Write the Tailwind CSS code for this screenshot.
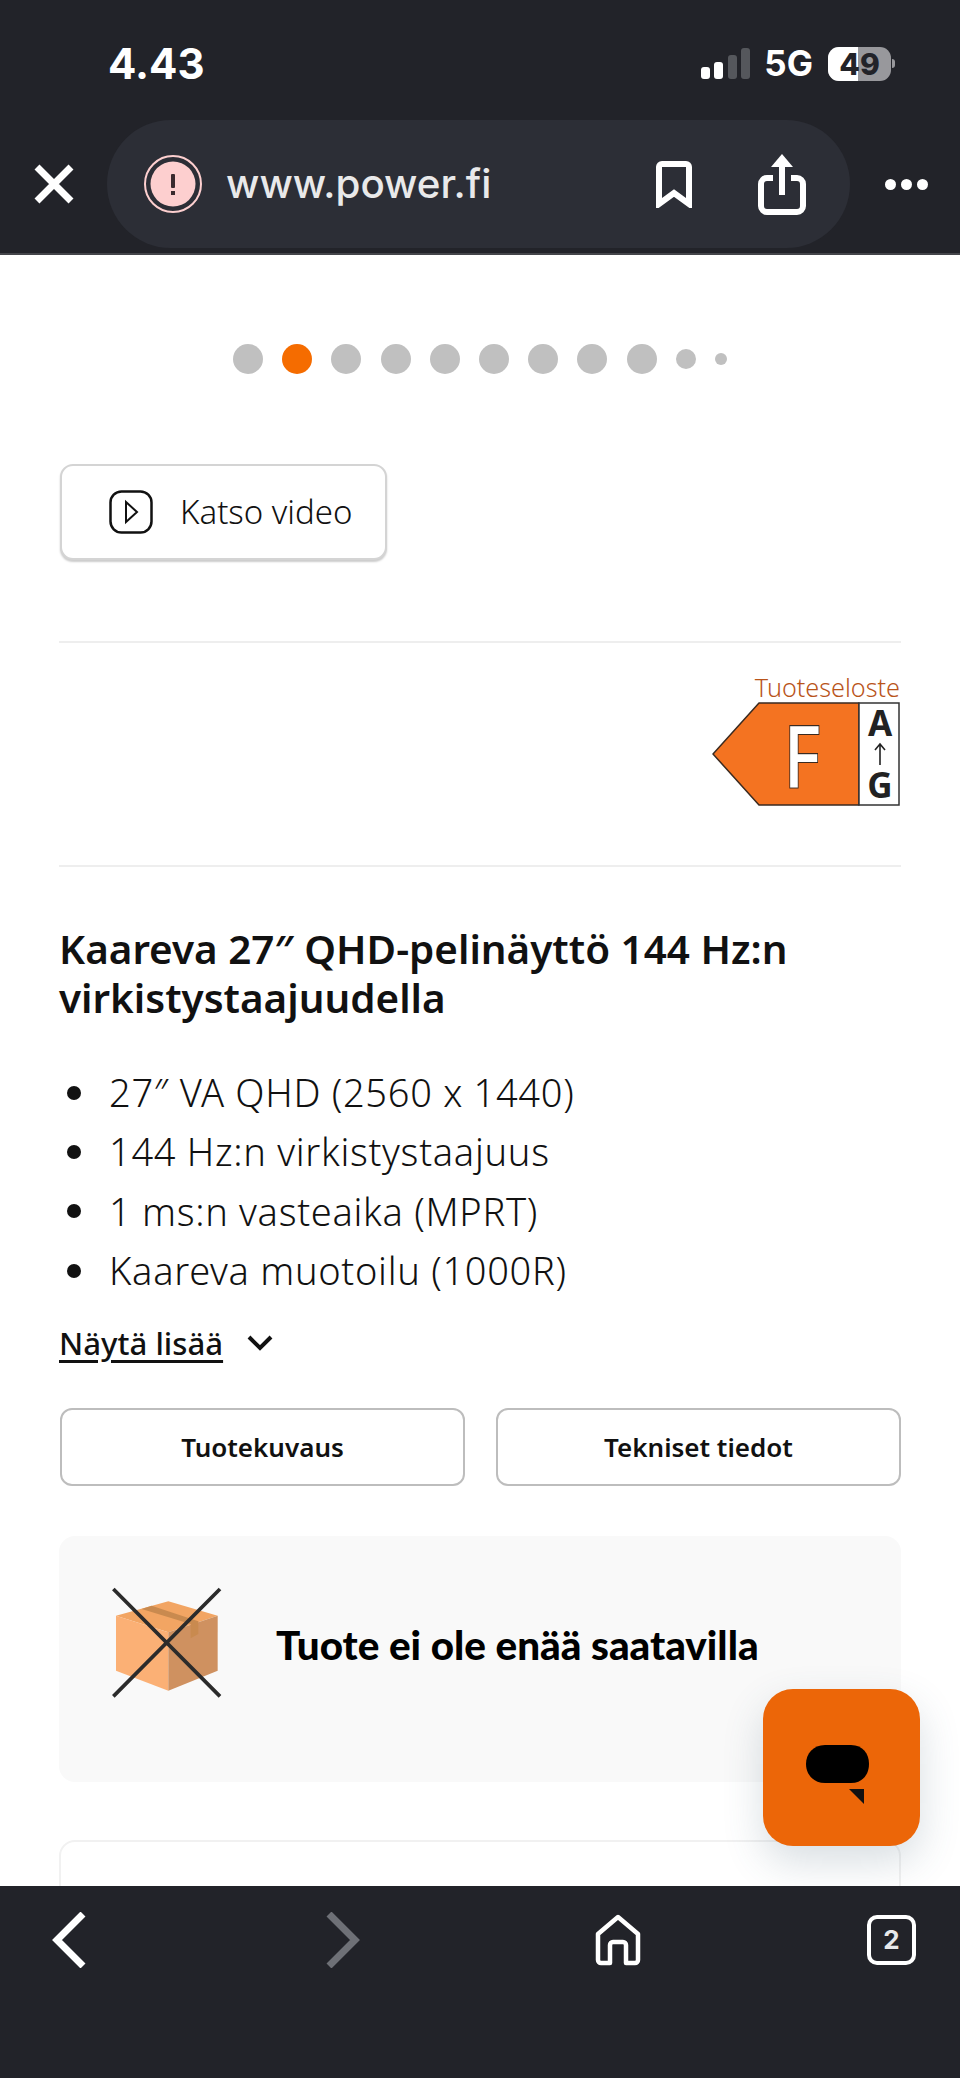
<!DOCTYPE html>
<html lang="fi">
  <head>
    <meta charset="UTF-8" />
    <meta name="viewport" content="width=device-width, initial-scale=1.0" />
    <title>Power.fi</title>
    <script src="https://cdn.jsdelivr.net/npm/@tailwindcss/browser@4"></script>
  </head>
  <body class="bg-white">
    <div class="flex flex-col h-[2078px] w-[960px] overflow-hidden font-['Noto_Sans','Open_Sans',sans-serif]">
      <!-- browser top bar -->
      <header class="h-[255px] shrink-0 bg-[#222329] border-b-2 border-[#44454a] font-['Inter',sans-serif]">
        <div class="h-[120px] flex items-start pl-[108px]">
          <span class="mt-[40px] text-[42px] leading-[48px] font-bold text-white">4.43</span>
          <div class="ml-auto mr-[65px] mt-[47px] flex items-start">
            <div class="flex items-end gap-[4.5px] h-[32px]">
              <div class="w-[9px] h-[12px] rounded-[3px] bg-white"></div>
              <div class="w-[9px] h-[17px] rounded-[3px] bg-white"></div>
              <div class="w-[9px] h-[24px] rounded-[3px] bg-[#55575c]"></div>
              <div class="w-[9px] h-[31px] rounded-[3px] bg-[#55575c]"></div>
            </div>
            <span class="ml-[14px] text-[35px] leading-[36px] font-bold text-white mt-[-2px]">5G</span>
            <div class="ml-[15px] relative w-[63px] h-[34px] rounded-[11px] overflow-hidden bg-[#98989c] flex items-center justify-center">
              <div class="absolute left-0 top-0 h-full w-[30px] bg-white"></div>
              <span class="relative text-[30px] leading-[34px] font-extrabold text-[#222329]">49</span>
            </div>
            <div class="mt-[12px] ml-[1px] w-[3px] h-[9px] rounded-r-full bg-[#98989c]"></div>
          </div>
        </div>
        <div class="flex items-center">
          <svg class="ml-[34px] w-[40px] h-[40px]" viewBox="0 0 40 40" fill="none" stroke="#fff" stroke-width="7">
            <path d="M3 3l34 34M37 3L3 37" />
          </svg>
          <div class="ml-[33px] w-[743px] h-[128px] rounded-[64px] bg-[#2c2e36] flex items-center">
            <svg class="ml-[37px] w-[58px] h-[58px]" viewBox="0 0 58 58">
              <circle cx="29" cy="29" r="28" fill="none" stroke="#fdcfcf" stroke-width="2" />
              <circle cx="29" cy="29" r="22.5" fill="#fdcfcf" />
              <rect x="27" y="19" width="4" height="14" rx="1" fill="#3a2a2e" />
              <rect x="27" y="36" width="4" height="4" fill="#3a2a2e" />
            </svg>
            <span class="ml-[24px] text-[40.3px] leading-[48px] font-medium text-[#e9e9ea]">www.power.fi</span>
            <svg class="ml-auto w-[38px] h-[48px]" viewBox="0 0 38 48" fill="none" stroke="#fff" stroke-width="6">
              <path d="M4 44V7a3 3 0 0 1 3-3h24a3 3 0 0 1 3 3v37L19 33z" stroke-linejoin="miter" />
            </svg>
            <svg class="ml-[65px] mr-[44px] w-[48px] h-[62px]" viewBox="0 0 48 62" fill="none" stroke="#fff" stroke-width="6">
              <path d="M15 25H9a6 6 0 0 0-6 6v22a6 6 0 0 0 6 6h30a6 6 0 0 0 6-6V31a6 6 0 0 0-6-6h-6" />
              <path d="M24 42V8" />
              <path d="M24 1L13 14h22z" fill="#fff" stroke="none" />
            </svg>
          </div>
          <div class="ml-[35px] flex gap-[5px]">
            <div class="w-[11px] h-[11px] rounded-full bg-white"></div>
            <div class="w-[11px] h-[11px] rounded-full bg-white"></div>
            <div class="w-[11px] h-[11px] rounded-full bg-white"></div>
          </div>
        </div>
      </header>

      <main class="relative flex-1 overflow-hidden px-[59px]">
        <!-- carousel dots -->
        <div class="mt-[89px] ml-[174px] flex items-center gap-[19.2px] h-[30px]">
          <div class="w-[30px] h-[30px] rounded-full bg-[#c0c0c0]"></div>
          <div class="w-[30px] h-[30px] rounded-full bg-[#f56c00]"></div>
          <div class="w-[30px] h-[30px] rounded-full bg-[#c0c0c0]"></div>
          <div class="w-[30px] h-[30px] rounded-full bg-[#c0c0c0]"></div>
          <div class="w-[30px] h-[30px] rounded-full bg-[#c0c0c0]"></div>
          <div class="w-[30px] h-[30px] rounded-full bg-[#c0c0c0]"></div>
          <div class="w-[30px] h-[30px] rounded-full bg-[#c0c0c0]"></div>
          <div class="w-[30px] h-[30px] rounded-full bg-[#c0c0c0]"></div>
          <div class="w-[30px] h-[30px] rounded-full bg-[#c0c0c0]"></div>
          <div class="w-[20px] h-[20px] rounded-full bg-[#c0c0c0]"></div>
          <div class="w-[12px] h-[12px] rounded-full bg-[#c0c0c0]"></div>
        </div>

        <button class="mt-[90px] ml-px w-[327px] h-[96px] flex items-center rounded-[13px] bg-white border-2 border-[#d4d4d4] shadow-[0_2px_2px_#cccccc]">
          <svg class="ml-[47px] w-[44px] h-[44px]" viewBox="0 0 44 44" fill="none" stroke="#111" stroke-width="2.5">
            <rect x="1.5" y="1.5" width="41" height="41" rx="11" />
            <path d="M17 12l11 10-11 10z" stroke-width="2" />
          </svg>
          <span class="ml-[27px] text-[33px] leading-[40px] font-light text-[#111]">Katso video</span>
        </button>

        <div class="mt-[81px] h-[2px] bg-[#eeeeee]"></div>

        <!-- energy label -->
        <div class="h-[222px] flex flex-col items-end">
          <span class="mt-[29px] mr-px text-[25.2px] leading-[30px] font-light text-[#b9541a]">Tuoteseloste</span>
          <svg class="mt-[-11px] w-[190px] h-[125px] shrink-0" viewBox="712 690 190 125">
            <path d="M760 702H860V804H760L714 753z" fill="#f47321" stroke="#3a2a20" stroke-width="1.5" stroke-linejoin="round" />
            <rect x="860" y="702" width="40" height="102" fill="#fff" stroke="#333" stroke-width="1.5" />
            <text transform="translate(803 786) scale(0.82 1)" text-anchor="middle" font-size="86" font-weight="500" fill="#fff" stroke="#3a2a20" stroke-width="2" paint-order="stroke">F</text>
            <text x="881" y="735" text-anchor="middle" font-size="35" font-weight="700" fill="#222">A</text>
            <path d="M881 764V743M876 749l5-6 5 6" fill="none" stroke="#222" stroke-width="1.6" />
            <text x="881" y="797" text-anchor="middle" font-size="35" font-weight="700" fill="#222">G</text>
          </svg>
        </div>

        <div class="h-[2px] bg-[#eeeeee]"></div>

        <h1 class="mt-[57px] text-[40.4px] leading-[49px] font-semibold text-[#111]">Kaareva 27″ QHD-pelinäyttö 144 Hz:n virkistystaajuudella</h1>

        <ul class="mt-[41px] ml-px text-[38px] leading-[59.3px] font-light tracking-[0.7px] text-[#111]">
          <li class="flex items-center"><span class="ml-[7px] mr-[28px] w-[14px] h-[14px] rounded-full bg-[#111]"></span>27″ VA QHD (2560 x 1440)</li>
          <li class="flex items-center"><span class="ml-[7px] mr-[28px] w-[14px] h-[14px] rounded-full bg-[#111]"></span>144 Hz:n virkistystaajuus</li>
          <li class="flex items-center"><span class="ml-[7px] mr-[28px] w-[14px] h-[14px] rounded-full bg-[#111]"></span>1 ms:n vasteaika (MPRT)</li>
          <li class="flex items-center"><span class="ml-[7px] mr-[28px] w-[14px] h-[14px] rounded-full bg-[#111]"></span>Kaareva muotoilu (1000R)</li>
        </ul>

        <div class="mt-[21px] flex items-center h-[44px]">
          <span class="text-[31.2px] leading-[44px] font-medium underline underline-offset-[5px] text-[#111]">Näytä lisää</span>
          <svg class="ml-[24px] w-[26px] h-[16px]" viewBox="0 0 26 16" fill="none" stroke="#111" stroke-width="4">
            <path d="M2 2l11 11L24 2" />
          </svg>
        </div>

        <div class="mt-[43px] ml-px grid grid-cols-2 gap-[31px]">
          <button class="h-[78px] rounded-[12px] border-2 border-[#bdbdbd] text-[26px] font-semibold text-[#111]">Tuotekuvaus</button>
          <button class="h-[78px] rounded-[12px] border-2 border-[#bdbdbd] text-[26px] font-semibold text-[#111]">Tekniset tiedot</button>
        </div>

        <!-- not available panel -->
        <div class="mt-[50px] h-[246px] rounded-[16px] bg-[#f9f9f9] flex items-center">
          <svg class="self-start mt-[3px] ml-px w-[240px] h-[200px] shrink-0" viewBox="0 0 720 600">
            <path d="M168 230L325 187L473 230L325 280z" fill="#f2a563" />
            <path d="M168 230L325 280V455L168 395z" fill="#fbb075" />
            <path d="M325 280L473 230V395L325 455z" fill="#cf9160" />
            <path d="M245 210L275 200L415 247V285L392 298V255z" fill="#c98a4f" />
            <path d="M160 150L480 472M480 150L160 472" stroke="#2b2b2b" stroke-width="11" />
          </svg>
          <span class="ml-[-24px] mb-[28px] text-[40.4px] leading-[44px] font-black text-black font-['Lato',sans-serif]">Tuote ei ole enää saatavilla</span>
        </div>

        <div class="mt-[58px] h-[80px] rounded-t-[16px] bg-white border-2 border-[#f1f1f1]"></div>

        <!-- chat button -->
        <div class="absolute left-[763px] top-[1434px] w-[157px] h-[157px] rounded-[30px] bg-[#ec6608] shadow-[0_16px_40px_rgba(60,90,110,0.2)] flex items-center justify-center">
          <svg class="w-[157px] h-[157px]" viewBox="0 0 157 157">
            <path d="M62 56h26c12 0 18 9 18 19s-6 19-18 19H62c-12 0-19-9-19-19s7-19 19-19z" fill="#000" />
            <path d="M86 100h15v15z" fill="#111" />
          </svg>
        </div>
      </main>

      <!-- browser bottom bar -->
      <footer class="h-[192px] shrink-0 bg-[#222329] relative flex items-start">
        <svg class="mt-[26px] ml-[52px] w-[34px] h-[56px]" viewBox="0 0 34 56" fill="none" stroke="#fff" stroke-width="7">
          <path d="M31 2L5 28l26 26" />
        </svg>
        <svg class="mt-[26px] ml-[240px] w-[34px] h-[56px]" viewBox="0 0 34 56" fill="none" stroke="#6e7076" stroke-width="7">
          <path d="M3 2l26 26L3 54" />
        </svg>
        <svg class="mt-[28px] ml-[235px] w-[46px] h-[52px]" viewBox="0 0 46 52" fill="none" stroke="#fff" stroke-width="4.5" stroke-linejoin="round">
          <path d="M3 20L23 3l20 17v26a3 3 0 0 1-3 3h-9V31a3 3 0 0 0-3-3h-10a3 3 0 0 0-3 3v18H6a3 3 0 0 1-3-3z" />
        </svg>
        <div class="mt-[29px] ml-[226px] w-[49px] h-[50px] rounded-[10px] border-[4px] border-white flex items-center justify-center font-['Inter',sans-serif] text-[26px] leading-none font-bold text-[#e8e8ea]">2</div>
      </footer>
    </div>
  </body>
</html>
